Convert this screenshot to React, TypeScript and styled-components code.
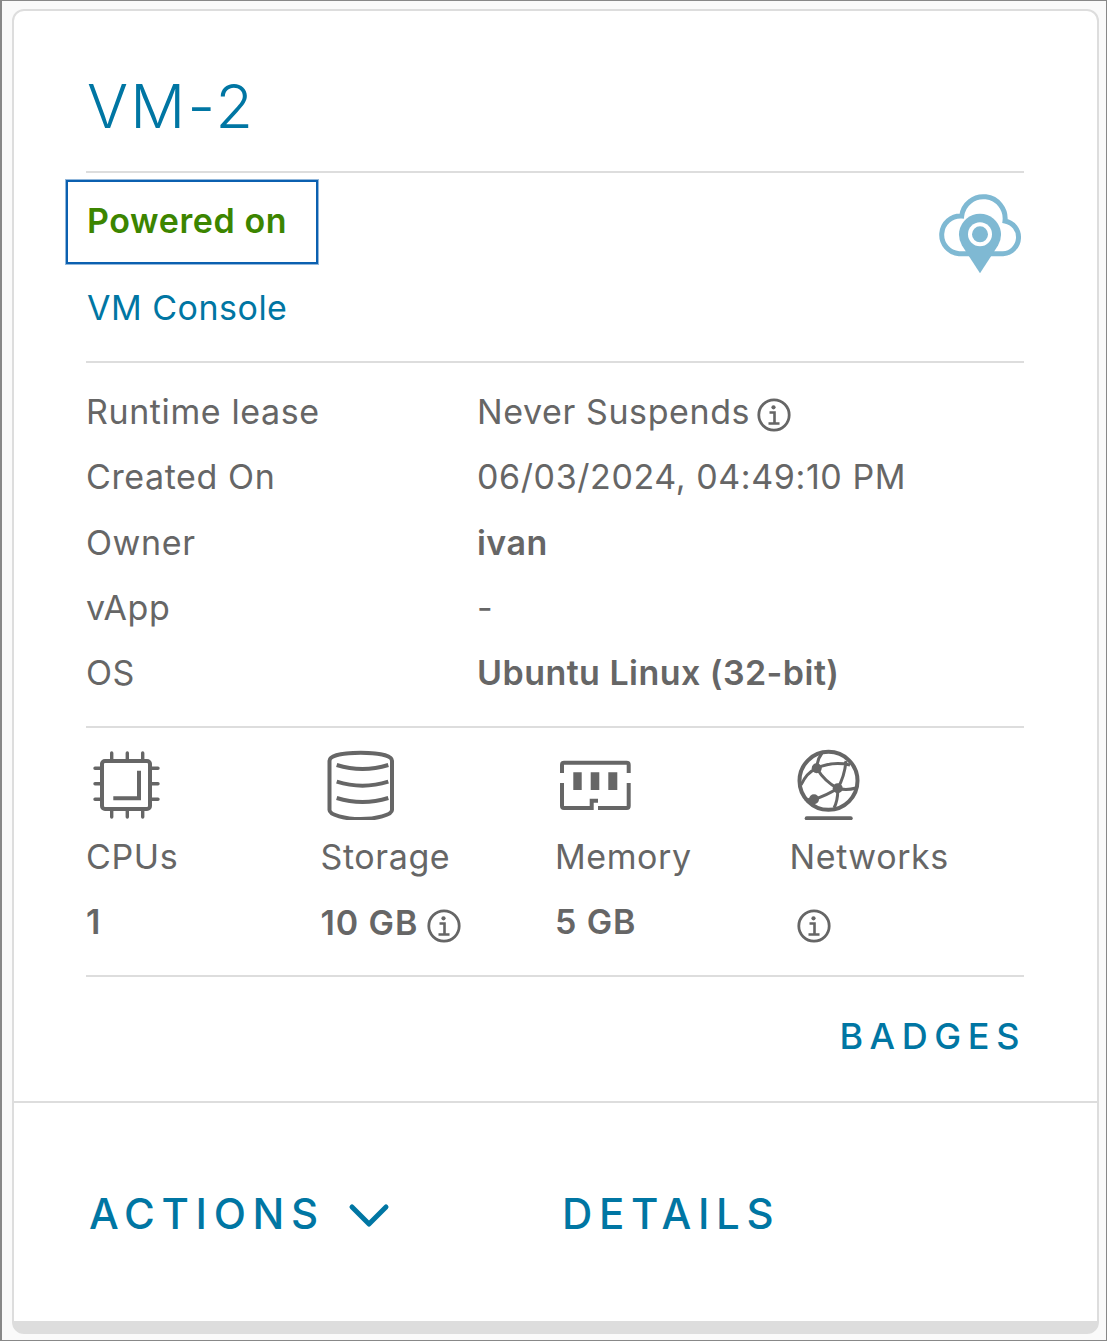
import React from "react";
import styled, { createGlobalStyle } from "styled-components";

const Global = createGlobalStyle`
  html, body { margin: 0; padding: 0; background: #fafafa; }
  body { font-family: Inter, "Liberation Sans", sans-serif; color: #666; }
`;
const Frame = styled.div`
  box-sizing: border-box; width: 1107px; height: 1341px;
  border: 1px solid #888; border-left-width: 2px; padding: 8px 7px 6px 10px; background: #fafafa;
`;
const Card = styled.section`
  box-sizing: border-box; height: 100%; background: #fff;
  border: 2px solid #ddd; border-bottom-width: 13px; border-radius: 12px;
  display: flex; flex-direction: column;
`;
const Body = styled.div`
  box-sizing: border-box; height: 1092px; padding: 0 73px 0 72px;
  border-bottom: 2px solid #ddd; display: flex; flex-direction: column;
`;
const Title = styled.h1`
  margin: 0; height: 162px; box-sizing: border-box; padding: 58px 0 0 1px;
  font-size: 61px; line-height: 74px; font-weight: 300; color: #0076a3;
  letter-spacing: 2.3px; border-bottom: 2px solid #ddd;
`;
const StatusSection = styled.div`
  box-sizing: border-box; height: 190px; padding-top: 7px;
  border-bottom: 2px solid #ddd;
`;
const StatusRow = styled.div`
  display: flex; justify-content: space-between; align-items: flex-start;
`;
const Status = styled.div`
  box-sizing: border-box; width: 252px; height: 84px; margin-left: -20px;
  border: 2px solid #0b60b0; box-shadow: 0 0 0 1px rgba(11, 96, 176, 0.45);
  padding: 0 0 4px 19px; display: flex; align-items: center;
  font-size: 34px; font-weight: 600; letter-spacing: 0.6px; color: #3c8500;
`;
const CloudIcon = styled.svg`
  width: 90px; height: 90px; margin: 8px -1px 0 0; display: block; flex: none;
`;
const ConsoleLink = styled.a`
  display: block; margin-top: 0; padding-left: 1px;
  font-size: 34px; line-height: 60px; font-weight: 400; letter-spacing: 0.5px; color: #0076a3;
`;
const Details = styled.dl`
  margin: 0; box-sizing: border-box; height: 365px; padding-top: 16px;
  border-bottom: 2px solid #ddd; display: grid;
  grid-template-columns: 391px 1fr; grid-auto-rows: 65.3px; align-items: center;
  font-size: 34px; font-weight: 400; letter-spacing: 0.6px;
`;
const Term = styled.dt`
  padding-left: 0;
`;
const Value = styled.dd<{ $bold?: boolean }>`
  margin: 0; font-weight: ${(p) => (p.$bold ? 600 : 400)};
  letter-spacing: ${(p) => (p.$bold ? "0.45px" : "0.6px")};
  display: flex; align-items: center; gap: 7px;
`;
const InfoSvg = styled.svg<{ $size: number }>`
  width: ${(p) => p.$size}px; height: ${(p) => p.$size}px; display: block; flex: none; margin-top: 7px;
`;
const Resources = styled.div`
  box-sizing: border-box; height: 249px; padding-top: 20px;
  border-bottom: 2px solid #ddd; display: grid; grid-template-columns: repeat(4, 234.5px);
`;
const Resource = styled.div`
  display: flex; flex-direction: column;
`;
const ResIcon = styled.div`
  height: 73px;
`;
const ResSvg = styled.svg<{ $offset: number; $w?: number }>`
  display: block; height: 72px; width: ${(p) => p.$w ?? 72}px; margin-left: ${(p) => p.$offset}px;
`;
const ResLabel = styled.div`
  font-size: 34px; font-weight: 400; letter-spacing: 0.6px; line-height: 40px; margin-top: 16px;
`;
const ResValue = styled.div<{ $indent?: number }>`
  font-size: 34px; font-weight: 600; letter-spacing: 0.9px; line-height: 40px; margin-top: 25px;
  padding-left: ${(p) => p.$indent ?? 0}px;
  display: flex; align-items: center; gap: 9px;
`;
const BadgesRow = styled.div`
  display: flex; justify-content: flex-end; padding: 36px 0 0 0; margin-right: -2px;
`;
const CapsLink = styled.a`
  font-size: 36px; line-height: 46px; font-weight: 500; color: #0076a3; letter-spacing: 6.6px;
`;
const Actions = styled.div`
  display: flex; align-items: center; padding: 85px 0 0 75px;
`;
const ActionLink = styled.a`
  font-size: 42px; line-height: 52px; font-weight: 500; color: #0076a3; letter-spacing: 6.7px;
`;
const Chevron = styled.svg`
  width: 42px; height: 26px; display: block; margin: 4px 0 0 23px;
`;
const DetailsLink = styled(ActionLink)`
  margin-left: 172px;
`;

const Info = ({ size = 34 }: { size?: number }) => (
  <InfoSvg $size={size} viewBox="0 0 34 34" fill="none" stroke="#666">
    <circle cx="17" cy="17" r="15.2" strokeWidth="2.8" />
    <circle cx="16.5" cy="9.3" r="2.1" fill="#666" stroke="none" />
    <path d="M12.5 14.5H17.5V25M11.5 25.5H22.5" strokeWidth="2.6" />
  </InfoSvg>
);

const nodeLines =
  "M21.7 20.3C22 15 24 9 27 5M21.7 20.3C15 23 10 28 6 37M21.7 20.3C33 15 46 15 55 17M21.7 20.3C27 29 34 36 42.7 40.3M42.7 40.3C47 33 50 24 51 13M42.7 40.3C48 42 54 42 61 40M42.7 40.3C34 46 27 49 19 51.3M42.7 40.3C43 47 42 54 39 60M19 51.3C16 52 13 52 10 51";

export default function App() {
  return (
    <>
      <Global />
      <Frame>
        <Card>
          <Body>
            <Title>VM-2</Title>
            <StatusSection>
              <StatusRow>
                <Status>Powered on</Status>
                <CloudIcon viewBox="0 0 90 90">
                  <path
                    d="M24 65.7A18.9 18.9 0 0 1 26.7 28A21 21 0 0 1 70 33A16.5 16.5 0 0 1 68 65.7H24Z"
                    fill="none" stroke="#7fb9d3" strokeWidth="5"
                  />
                  <path d="M45 85.3L27 57.5A21 21 0 1 1 63 57.5Z" fill="#7fb9d3" />
                  <circle cx="45" cy="46.3" r="12" fill="#fff" />
                  <circle cx="45" cy="46.3" r="8" fill="#7fb9d3" />
                </CloudIcon>
              </StatusRow>
              <ConsoleLink>VM Console</ConsoleLink>
            </StatusSection>
            <Details>
              <Term>Runtime lease</Term>
              <Value>Never Suspends <Info /></Value>
              <Term>Created On</Term>
              <Value>06/03/2024, 04:49:10 PM</Value>
              <Term>Owner</Term>
              <Value $bold>ivan</Value>
              <Term>vApp</Term>
              <Value>-</Value>
              <Term>OS</Term>
              <Value $bold>Ubuntu Linux (32-bit)</Value>
            </Details>
            <Resources>
              <Resource>
                <ResIcon>
                  <ResSvg $offset={4} viewBox="0 0 72 72" fill="none" stroke="#666" strokeWidth="4" strokeLinecap="round">
                    <rect x="12" y="13" width="48" height="48" rx="3" />
                    <path d="M21.7 5V11M37.3 5V11M52.7 5V11M21.7 63V69M37.3 63V69M52.7 63V69M5 20.3H10M5 35.7H10M5 51.3H10M62 20.3H68M62 35.7H68M62 51.3H68" strokeWidth="3.4" />
                    <path d="M23.3 50.3H49V22.7" strokeLinecap="butt" />
                  </ResSvg>
                </ResIcon>
                <ResLabel>CPUs</ResLabel>
                <ResValue>1</ResValue>
              </Resource>
              <Resource>
                <ResIcon>
                  <ResSvg $offset={4} viewBox="0 0 72 72" fill="none" stroke="#666" strokeWidth="4">
                    <path d="M4.5 12.7C4.5 7 20 4.7 35.7 4.7C51 4.7 67 7 67 12.7V62C67 67 51 71 35.7 71C20 71 4.5 67 4.5 62Z" />
                    <path d="M11.7 17Q37.5 25 63.3 17M11.7 33.7Q37.5 41.7 63.3 33.7M11.7 50Q37.5 58 63.3 50" />
                  </ResSvg>
                </ResIcon>
                <ResLabel>Storage</ResLabel>
                <ResValue>10 GB <Info /></ResValue>
              </Resource>
              <Resource>
                <ResIcon>
                  <ResSvg $offset={0} $w={80} viewBox="0 0 80 72" fill="none" stroke="#666" strokeWidth="4">
                    <path d="M7 25V17Q7 14.7 9 14.7H71.7Q73.7 14.7 73.7 17V25M7 35V58Q7 60 9 60H36.7V52.7H43M43 60H71.7Q73.7 60 73.7 58V35" />
                    <path d="M18.3 24.3H26.7V42H18.3ZM35.7 24.3H44.3V42H35.7ZM53.3 24.3H62.3V42H53.3Z" fill="#666" stroke="none" />
                  </ResSvg>
                </ResIcon>
                <ResLabel>Memory</ResLabel>
                <ResValue>5 GB</ResValue>
              </Resource>
              <Resource>
                <ResIcon>
                  <ResSvg $offset={5} viewBox="0 0 72 72" fill="none" stroke="#666" strokeWidth="4">
                    <circle cx="33.5" cy="32.8" r="29" />
                    <path d="M11.7 70.3H55.7" strokeLinecap="round" />
                    <path d={nodeLines} strokeWidth="3" />
                    <circle cx="21.7" cy="20.3" r="5" fill="#666" stroke="none" />
                    <circle cx="42.7" cy="40.3" r="5" fill="#666" stroke="none" />
                    <circle cx="19" cy="51.3" r="5" fill="#666" stroke="none" />
                  </ResSvg>
                </ResIcon>
                <ResLabel>Networks</ResLabel>
                <ResValue $indent={7}><Info /></ResValue>
              </Resource>
            </Resources>
            <BadgesRow>
              <CapsLink>BADGES</CapsLink>
            </BadgesRow>
          </Body>
          <Actions>
            <ActionLink>ACTIONS</ActionLink>
            <Chevron viewBox="0 0 42 26" fill="none" stroke="#0076a3" strokeWidth="5" strokeLinecap="round" strokeLinejoin="round">
              <path d="M4 4L21 21L38 4" />
            </Chevron>
            <DetailsLink>DETAILS</DetailsLink>
          </Actions>
        </Card>
      </Frame>
    </>
  );
}
